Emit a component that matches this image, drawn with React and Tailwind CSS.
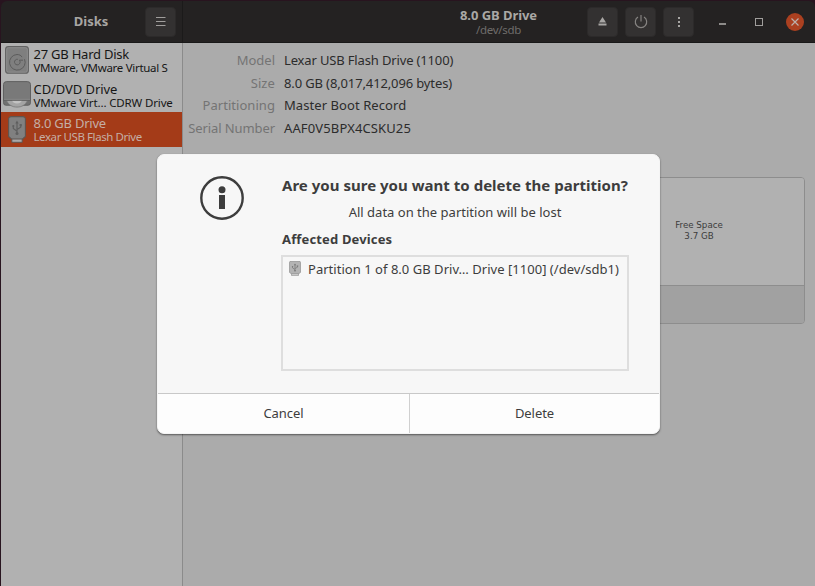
import React from "react";

function HardDiskIcon() {
  return (
    <svg width="24" height="28" viewBox="0 0 24 28" fill="none">
      <rect x="0.6" y="0.6" width="22.8" height="26.6" rx="2.8" fill="#7f7f7f" stroke="#626262" strokeWidth="1.1" />
      <rect x="1.7" y="1.7" width="20.6" height="24.4" rx="1.8" stroke="#919191" strokeWidth="0.8" />
      <path d="M19.500 13.200A7.800 7.800 0 1 1 12 8.500c2.400 0 4.200 1 5 2.600M14.400 14.200a2.800 2.800 0 1 1-1.600-.9M14.400 14.200h3.600" stroke="#5c5c5c" strokeWidth="1" />
    </svg>
  );
}

function OpticalIcon() {
  return (
    <svg width="28" height="27" viewBox="0 0 28 27" fill="none">
      <path d="M.5 19h27v2.800a2.500 2.500 0 0 1-2.500 2.500H3a2.500 2.500 0 0 1-2.500-2.500z" fill="#707070" stroke="#5c5c5c" strokeWidth="0.800" />
      <path d="M3.500 19.500h21c-2 4.400-5.800 6.600-10.500 6.600s-8.500-2.200-10.500-6.600z" fill="#a4a4a4" stroke="#777777" strokeWidth="0.800" />
      <path d="M9 19.500h10c-.8 2-2.600 3-5 3s-4.200-1-5-3z" fill="#c2c2c2" />
      <path d="M3.500.6h21a3 3 0 0 1 3 3v15.600H.5V3.600a3 3 0 0 1 3-3z" fill="#797979" stroke="#606060" strokeWidth="1" />
      <path d="M1 18.300h26" stroke="#8d8d8d" strokeWidth="0.8" />
    </svg>
  );
}

function UsbIcon({ light = false, className = "" }) {
  const body = light ? "#b3b3b3" : "#808080";
  const edge = light ? "#8a8a8a" : "#5f5550";
  const cap = light ? "#d6d6d6" : "#a9a9a9";
  const mark = light ? "#777777" : "#5f5f5f";
  return (
    <svg className={className} viewBox="0 0 18 27" preserveAspectRatio="none" fill="none">
      <path d="M3.8 21.5h10.4v4.8H3.8z" fill={cap} stroke={edge} strokeWidth="1" />
      <path d="M3 .6h12a2.4 2.4 0 0 1 2.4 2.4v17.4L14.6 23H3.4L.6 20.400V3A2.400 2.400 0 0 1 3 .6z" fill={body} stroke={edge} strokeWidth="1.100" />
      <path d="M9 6v11M9 15.200l-3.700-2.700v-2.300M9 13.500l3.700-2.300V9" stroke={mark} strokeWidth="1.200" />
      <path d="M7.300 7.500 9 4.600l1.700 2.900z" fill={mark} />
      <circle cx="9" cy="17.600" r="1.500" fill={mark} />
      <circle cx="5.300" cy="10" r="1.100" fill={mark} />
      <path d="M11.600 8h2.200v2.200h-2.200z" fill={mark} />
    </svg>
  );
}

function HeaderButton({ children }) {
  return (
    <div className="flex h-[30px] w-[31px] shrink-0 items-center justify-center rounded-[4px] border border-[#2c2a2a] bg-[#333131]">
      {children}
    </div>
  );
}

function Header() {
  return (
    <div className="flex h-[42px] shrink-0 border-b border-[#191919] bg-[#242222]">
      <div className="flex w-[182px] shrink-0 items-center border-r border-[#1b1a1a] pr-[6px]">
        <div className="flex-1 pl-[36px] text-center text-[13px] font-bold tracking-[-0.02px] text-[#a8a6a3]">Disks</div>
        <HeaderButton>
          <svg width="10" height="10" viewBox="0 0 10 10" stroke="#a09e9c" strokeWidth="1">
            <path d="M0 .5h9.500M0 4.500h9.500M0 8.500h9.500" />
          </svg>
        </HeaderButton>
      </div>
      <div className="flex flex-1 items-center pr-[11px]">
        <div className="flex flex-1 flex-col items-center pt-px pl-[227px] text-center">
          <div className="text-[13px] leading-[15px] font-bold whitespace-nowrap tracking-[-0.05px] text-[#aaa8a5]">8.0 GB Drive</div>
          <div className="text-[11.500px] leading-[14px] tracking-[-0.3px] text-[#6f6d6b]">/dev/sdb</div>
        </div>
        <div className="flex gap-[7px]">
          <HeaderButton>
            <svg width="9" height="9" viewBox="0 0 9 9" fill="#a8a6a4">
              <path d="M4.500 0 8 5.500H1zM.5 6.500h8V8.500h-8z" />
            </svg>
          </HeaderButton>
          <HeaderButton>
            <svg width="14" height="14" viewBox="0 0 14 14" fill="none" stroke="#858381" strokeWidth="1.200">
              <path d="M4 2a5.700 5.700 0 1 0 6 0M7 0v6.500" />
            </svg>
          </HeaderButton>
          <HeaderButton>
            <svg width="2" height="10" viewBox="0 0 2 10" fill="#a8a6a4">
              <path d="M0 0h2v2H0zM0 4h2v2H0zM0 8h2v2H0z" />
            </svg>
          </HeaderButton>
        </div>
        <div className="mt-[5px] ml-[25px] h-[1.500px] w-[7px] bg-[#8d8b89]" />
        <div className="ml-[29px] h-[8px] w-[8px] border border-[#a09e9c]" />
        <div className="ml-[23px] flex h-[18px] w-[18px] items-center justify-center rounded-full bg-[#ab4020]">
          <svg width="8" height="8" viewBox="0 0 8 8" stroke="#bcb0ab" strokeWidth="1.200">
            <path d="m.5.5 7 7m0-7-7 7" />
          </svg>
        </div>
      </div>
    </div>
  );
}

function SidebarRow({ icon, title, subtitle, titleClass, subtitleClass, selected }) {
  return (
    <div className={"flex h-[34.500px] items-center " + (selected ? "bg-[#a43b18] text-[#c5aea5]" : "text-[#161616]")}>
      <div className="flex w-[32px] shrink-0 items-center justify-center">{icon}</div>
      <div className="min-w-0 flex-1 pt-[2px] pl-[0.500px] whitespace-nowrap">
        <div className={"text-[13px] leading-[14px] " + titleClass}>{title}</div>
        <div className={"text-[11.500px] leading-[14px] " + subtitleClass}>{subtitle}</div>
      </div>
    </div>
  );
}

const details = [
  ["Model", "Lexar USB Flash Drive (1100)", "tracking-[0px]", "tracking-[-0.15px]"],
  ["Size", "8.0 GB (8,017,412,096 bytes)", "tracking-[0.1px]", "tracking-[-0.13px]"],
  ["Partitioning", "Master Boot Record", "tracking-[0.05px]", "tracking-[0.07px]"],
  ["Serial Number", "AAF0V5BPX4CSKU25", "tracking-[-0.1px]", "tracking-[0.13px]"],
];

function Main() {
  return (
    <div className="flex flex-1 flex-col bg-[#ababab]">
      <div className="flex flex-col pt-[6.500px]">
        {details.map(([label, value, labelClass, valueClass]) => (
          <div key={label} className="flex h-[22.700px] items-center text-[13px] whitespace-nowrap">
            <div className={"w-[92px] text-right text-[#747474] " + labelClass}>{label}</div>
            <div className={"ml-[9px] text-[#2c2c2c] " + valueClass}>{value}</div>
          </div>
        ))}
      </div>
      <div className="mt-[10px] ml-[5px] h-[19px] text-[13px] font-bold text-[#2c2c2c]">Volumes</div>
      <div className="mt-[7.700px] mr-[10px] ml-[5px] flex h-[147px] flex-col overflow-hidden rounded-[4px] border border-[#8d8d8d]">
        <div className="flex flex-1 justify-end border-b border-[#8d8d8d] bg-[#b1b1b1]">
          <div className="flex w-[210px] flex-col items-center justify-center font-['DejaVu_Sans',sans-serif] text-[8.700px] leading-[11px] text-[#3c3c3c]">
            <div>Free Space</div>
            <div>3.7 GB</div>
          </div>
        </div>
        <div className="h-[37px] bg-[#a1a1a1]" />
      </div>
    </div>
  );
}

function DeleteDialog() {
  return (
    <div className="absolute top-[154px] left-[157px] flex h-[280px] w-[503px] flex-col overflow-hidden rounded-[7px] border border-[#f4f4f4] bg-[#f7f7f7] text-[#3d3d3d] shadow-[0_1px_2px_rgba(0,0,0,0.5)]">
      <div className="flex flex-1 pr-[30px] pl-[42px]">
        <svg className="mt-[21px] shrink-0" width="44" height="44" viewBox="0 0 44 44">
          <circle cx="22" cy="22" r="20.700" fill="none" stroke="#3d3d3d" strokeWidth="2.400" />
          <circle cx="22" cy="13.800" r="3.500" fill="#3d3d3d" />
          <path d="M19 19h6v14h-6z" fill="#3d3d3d" />
        </svg>
        <div className="ml-[37px] flex min-w-0 flex-1 flex-col whitespace-nowrap">
          <div className="mt-[19px] pl-px text-[15px] leading-[22px] font-bold tracking-[0.020px]">Are you sure you want to delete the partition?</div>
          <div className="mt-[7px] text-center text-[13px] leading-[18px] tracking-[0.010px]">All data on the partition will be lost</div>
          <div className="mt-[9px] pl-px text-[13px] leading-[18px] font-bold tracking-[0.150px]">Affected Devices</div>
          <div className="mt-[7px] flex h-[116px] items-start border-2 border-[#dedede] pt-[3px] pl-[6px]">
            <UsbIcon light className="mt-px h-[15px] w-[12px] shrink-0" />
            <div className="ml-[7px] text-[13px] leading-[18px] tracking-[0.030px]">Partition 1 of 8.0 GB Driv… Drive [1100] (/dev/sdb1)</div>
          </div>
        </div>
      </div>
      <div className="flex h-[40px] shrink-0 border-t border-[#c8c8c8] bg-[#fdfdfd] text-[13px] tracking-[-0.05px]">
        <div className="flex w-[252px] items-center justify-center border-r border-[#d0d0d0]">Cancel</div>
        <div className="flex flex-1 items-center justify-center">Delete</div>
      </div>
    </div>
  );
}

export default function App() {
  return (
    <div className="relative h-[586px] w-[815px] overflow-hidden bg-[#28141f] font-['Noto_Sans','Open_Sans',sans-serif]">
      <div className="flex h-full flex-col pt-px pl-px">
        <div className="flex min-h-0 flex-1 flex-col overflow-hidden rounded-t-[6px]">
          <Header />
          <div className="flex min-h-0 flex-1">
            <div className="w-[182px] shrink-0 border-r border-[#8b8b8b] bg-[#b1b1b1]">
              <SidebarRow icon={<HardDiskIcon />} title="27 GB Hard Disk" subtitle="VMware, VMware Virtual S" titleClass="tracking-[-0.23px]" subtitleClass="tracking-[-0.3px]" />
              <SidebarRow icon={<OpticalIcon />} title="CD/DVD Drive" subtitle="VMware Virt… CDRW Drive" titleClass="tracking-[-0.08px]" subtitleClass="tracking-[-0.15px]" />
              <SidebarRow selected icon={<UsbIcon className="h-[27px] w-[18px]" />} title="8.0 GB Drive" subtitle="Lexar USB Flash Drive" titleClass="tracking-[-0.23px]" subtitleClass="tracking-[-0.42px]" />
            </div>
            <Main />
          </div>
        </div>
      </div>
      <DeleteDialog />
    </div>
  );
}
